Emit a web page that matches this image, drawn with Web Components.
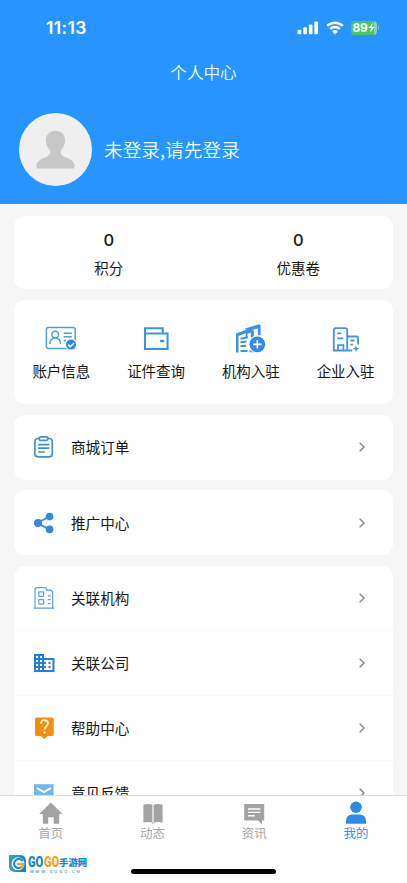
<!DOCTYPE html>
<html lang="zh-CN">
<head>
<meta charset="utf-8">
<title>个人中心</title>
<style>
html,body{margin:0;height:100%;overflow:hidden}
body{font-family:"Noto Sans CJK SC","Liberation Sans",sans-serif;color:#161616;background:#f6f6f6}
</style>
</head>
<body>
<profile-page></profile-page>
<script>
const define = (name, html) => {
  customElements.define(name, class extends HTMLElement {
    constructor() {
      super();
      const t = document.createElement('template');
      t.innerHTML = html;
      this.attachShadow({mode: 'open'}).append(t.content.cloneNode(true));
    }
    connectedCallback() {
      for (const el of this.shadowRoot.querySelectorAll('[data-bind]'))
        el.textContent = this.getAttribute(el.dataset.bind) || '';
    }
  });
};

const ICONS = {
  idcard: [32, `<g fill="none" stroke="#4f9fdc" stroke-width="1.5"><rect x="1.4" y="4.6" width="28.8" height="21" rx="2"/><circle cx="10.2" cy="11.6" r="3.4"/><path d="M4.8 21c.2-3.8 2.3-6 5.4-6s5.2 2.2 5.4 6M18.6 10.2h8.2M18.6 13.8h8.2M18.6 17.4h2.4"/></g><circle cx="26" cy="21.6" r="6" fill="#fff"/><circle cx="26" cy="21.6" r="5" fill="#2c8be0"/><path d="M23.2 21.6l2.1 2.1 3.7-3.8" fill="none" stroke="#fff" stroke-width="1.5"/>`],
  wallet: [32, `<g fill="none" stroke="#3b94e0" stroke-width="2"><path d="M5 10.400V5.200h17.800v5.200M5 10.400h22.600v15.700H5z"/></g><path d="M20 16.800h4.200v2.500H20z" fill="#3b94e0"/>`],
  org: [32, `<g fill="#3c93de"><path d="M10.500 6.800V5.200L24.200 1.300l1.400 1.200v9.800c-1.100 0-1.800.1-2.700.4V5.400L16 7.300z"/><path d="M1 29.500V10.500l9.600-3.500h7l1.300 1.200v6.500l-3 2V9.400L12.500 10.700v3.800l-1.700.5v-4.700l-7.300 2.600v16.600z"/></g><path d="M5.500 15.700l7.500-1.500M5.500 19.300l6-.9M5.500 23h5.500M5.500 28h7M14.500 28.200h4" stroke="#3c93de" stroke-width="2"/><circle cx="22.300" cy="21.300" r="9" fill="#fff"/><circle cx="22.300" cy="21.300" r="7.900" fill="#2f8ce2"/><path d="M18 21.300h8.600M22.300 17v8.600" stroke="#fff" stroke-width="1.700"/>`],
  firm: [32, `<g fill="none" stroke="#3f98e2" stroke-width="1.800"><path d="M17.200 27.500H3.800V7.200q0-2 2-2h9.400q2 0 2 2v20.300zM8 27.200v-5h5.400v5M7.200 10.300h4M7.200 15.400h6.200M17.200 13.500h9.400q1.500 0 1.500 1.500v6.500M17.200 27.500h5.200M20.400 17.500h4M20.400 21.600h2.500"/></g><path d="M26 22.500l1 2.300 2.400 1-2.400 1-1 2.400-1-2.400-2.400-1 2.400-1z" fill="#3f98e2"/>`],
  clipboard: [24, `<g fill="none" stroke="#4091cd" stroke-width="1.700" stroke-linejoin="round" stroke-linecap="round"><path d="M7.300 3.500H5.500Q2.900 3.900 2.900 6.500v12.300q0 3 3 3h11.400q3 0 3-3V6.500q0-2.600-2.600-3h-1.600"/><path d="M8.600 1.900h6q1.500 0 1.500 1.500t-1.500 2h-6q-1.500 0-1.500-1.700t1.500-1.800z"/><path d="M6.800 9.600h9.800M6.800 13.200h9.800M6.800 17h5.600"/></g>`],
  share: [24, `<path d="M17.300 5.700L5.300 12l12 6.300" fill="none" stroke="#3b8fd8" stroke-width="1.900"/><g fill="#2c8be0"><circle cx="6" cy="12" r="4"/><circle cx="17.600" cy="5.600" r="3.800"/><circle cx="17.600" cy="18.400" r="3.800"/></g>`],
  branch: [24, `<g fill="none" stroke="#5c9fd8" stroke-width="1.200"><path d="M1.500 22.200h21M3 22V3.800Q3 1.700 5 1.700h8.200q1.500 0 1.500 1.500v1h3.600q2.400.6 2.400 3V22"/><rect x="6.800" y="5.800" width="4.800" height="4.500" rx=".7"/><rect x="6.800" y="13.600" width="4.800" height="4.500" rx=".7"/><path d="M15.800 9.800h3M15.800 13.600h3M15.800 17.600h3"/></g>`],
  company: [24, `<path fill="#2081d2" fill-rule="evenodd" d="M12 7V3H2v18h20.500V7zM6 19H4v-2h2zm0-4H4v-2h2zm0-4H4V9h2zm0-4H4V5h2zm4 12H8v-2h2zm0-4H8v-2h2zm0-4H8V9h2zm0-4H8V5h2zm10.500 12H12v-2h2v-2h-2v-2h2v-2h-2V9h8.500zM18.500 11h-2v2h2zm0 4h-2v2h2z"/>`],
  help: [24, `<path d="M4.500 1.400h15.700q1.500 0 1.500 1.500v15.500q0 1.500-1.500 1.500h-4.700L12.300 23l-3.200-3.100H4.500Q3 19.900 3 18.400V2.900q0-1.500 1.500-1.500z" fill="#f0900f"/><path d="M8.900 8q0-3.700 3.500-3.700T15.900 7.500c0 2.700-3.400 2.800-3.400 6" fill="none" stroke="#fff3dc" stroke-width="1.900"/><circle cx="12.500" cy="16.600" r="1.200" fill="#fff3dc"/>`],
  mail: [24, `<path d="M2 3.200h19.600v17.500H2z" fill="#6fb7ee"/><path d="M5 7.200l6.900 4 6.900-4" fill="none" stroke="#fff" stroke-width="2"/>`],
  home: [24, `<path d="M.2 13L11.800 1.500 23.600 13h-3.400v9.800h-5.500v-6.500H9.200v6.500H3.800V13z" fill="#a3a3a3"/>`],
  book: [24, `<path d="M2.400 3.700q4.600-1.300 9 .1v17.600q-4.400-1-9 0zM12.600 3.800q4.400-1.400 9-.1v17.700q-4.600-1-9 0z" fill="#a3a3a3"/><path d="M10.500 21.500h3l-1.500 1.600z" fill="#a3a3a3"/>`],
  chat: [24, `<path d="M2.200 3h20v16.500H20V23l-4.200-3.500H2.200z" fill="#a3a3a3"/><path d="M6 8h12.400M6 11.400h12.400M6 14.800h7" stroke="#fff" stroke-width="1.400"/>`],
  me: [24, `<ellipse cx="12" cy="6.300" rx="5.800" ry="5.700" fill="#2c8be4"/><path d="M2 22.800v-2.700q0-6.600 6.500-6.600h7q6.500 0 6.500 6.600v2.700z" fill="#2c8be4"/>`]
};
customElements.define('app-icon', class extends HTMLElement {
  connectedCallback() {
    const [s, body] = ICONS[this.getAttribute('name')];
    const root = this.shadowRoot || this.attachShadow({mode: 'open'});
    root.innerHTML = `<style>:host{display:block;flex:none;width:${s}px;height:${s}px}svg{display:block}</style><svg width="${s}" height="${s}" viewBox="0 0 ${s} ${s}">${body}</svg>`;
  }
});

define('status-bar', `<style>
:host{display:flex;justify-content:space-between;align-items:center;height:55px;padding:0 28px 0 46px;box-sizing:border-box;color:#fff}
time{font:600 17.500px/20px Inter,sans-serif;letter-spacing:.35px}
svg{display:block}
.r{display:flex;align-items:center;gap:7px}
.b{display:flex;align-items:center}
.lvl{width:25.500px;height:14px;border-radius:4px;background:linear-gradient(90deg,#46c763 88%,#8bd3b5 88%);font:700 12px/14px Inter,sans-serif;display:flex;align-items:center;padding-left:1.500px;box-sizing:border-box;letter-spacing:-.2px}
.cap{width:1.500px;height:5px;border-radius:0 2px 2px 0;background:#79b7ee;margin-left:1px}
</style><time>11:13</time><div class="r">
<svg width="22" height="14" viewBox="0 0 22 14" fill="#fff"><rect x=".6" y="8.800" width="3.700" height="4.500" rx="1"/><rect x="6.300" y="6.300" width="3.700" height="7" rx="1"/><rect x="11.800" y="3.500" width="3.700" height="9.800" rx="1"/><rect x="17.300" y=".5" width="3.700" height="12.800" rx="1"/></svg>
<svg width="18" height="14" viewBox="0 0 18 14"><g fill="none" stroke="#fff" stroke-width="2.500"><path d="M1.200 4.900a11.200 11.200 0 0 1 15.600 0"/><path d="M4.200 8a7 7 0 0 1 9.600 0"/></g><path d="M6.100 10.400a4.200 4.200 0 0 1 5.800 0L9 13.400z" fill="#fff"/></svg>
<div class="b"><div class="lvl"><span>89</span><svg width="7" height="11" viewBox="0 0 7 11"><path d="M5 .5L.3 6h2.800L2 10.500 6.700 4.800H3.900z" fill="#fff"/></svg></div><div class="cap"></div></div></div>`);

define('profile-header', `<style>
:host{display:flex;flex-direction:column;height:204px;flex:none;background:#2894ff;color:#f1ffff}
h1{margin:0;height:35px;font-size:16.600px;font-weight:350;line-height:35px;text-align:center}
.user{display:flex;align-items:center;gap:12px;padding:23px 19px 0}
.name{font-size:18.700px;font-weight:350;line-height:28px;white-space:nowrap;padding-bottom:2px}
svg{display:block;flex:none}
</style><status-bar></status-bar><h1><slot name="title"></slot></h1>
<div class="user"><svg width="73" height="73" viewBox="0 0 73 73"><circle cx="36.500" cy="36.500" r="36.500" fill="#efefef"/><path d="M36.500 17.800c5.500 0 9.700 4 9.700 9.500 0 4.500-2.200 7.500-4.300 10-1.200 3.200.2 5 4 6.600 5 2 9.700 4 9.700 9.300 0 1.600-.7 2.300-2 2.300H19.400c-1.300 0-2-.7-2-2.300 0-5.300 4.700-7.300 9.700-9.300 3.800-1.600 5.200-3.400 4-6.600-2.100-2.500-4.300-5.500-4.300-10 0-5.500 4.200-9.500 9.700-9.500z" fill="#c7c7c7"/></svg><div class="name"><slot></slot></div></div>`);

define('ui-card', `<style>:host{display:block;flex:none;background:#fff;border-radius:11px;overflow:hidden}.row{display:flex;height:100%}:host([stack]) .row{display:block}</style><div class="row"><slot></slot></div>`);

define('stat-item', `<style>:host{flex:1;text-align:center;padding-top:13px}
b{display:block;font:500 16.500px/22px Inter,sans-serif}span{display:block;font-size:14.500px;line-height:20px;margin-top:7px}</style><b data-bind="value"></b><span><slot></slot></span>`);

define('grid-entry', `<style>:host{flex:1;display:flex;flex-direction:column;align-items:center;padding-top:23px}
span{font-size:14.500px;line-height:20px;margin-top:6px;white-space:nowrap}</style><slot name="icon"></slot><span><slot></slot></span>`);

define('list-row', `<style>:host{display:flex;align-items:center;height:65px;box-sizing:border-box;padding:0 27px 0 18px}
:host([line]){border-bottom:1px solid #f9f9f9}
span{flex:1;margin-left:15px;font-size:14.600px;line-height:22px}svg{display:block}</style><slot name="icon"></slot><span><slot></slot></span><svg width="8" height="12" viewBox="0 0 8 12"><path d="M1.700 1.800L6 6 1.700 10.200" fill="none" stroke="#8d8d8d" stroke-width="1.500"/></svg>`);

define('tab-item', `<style>:host{flex:1;display:flex;flex-direction:column;align-items:center;padding-top:5px;color:#a6a6a6}
:host([active]){color:#3492e2}span{font-size:12.500px;line-height:18px;margin-top:-1px;white-space:nowrap}</style><slot name="icon"></slot><span><slot></slot></span>`);

define('tab-bar', `<style>:host{display:flex;flex-direction:column;height:88px;flex:none;box-sizing:border-box;border-top:1px solid #dcdcdc;background:#fff}
nav{display:flex;height:73px}.home{width:145px;height:5px;border-radius:3px;background:#000;margin:0 auto}</style><nav><slot></slot></nav><div class="home"></div>`);

define('site-mark', `<style>:host{position:absolute;left:8px;top:854px;display:flex;gap:1px;align-items:flex-start}
svg{display:block}.t{display:flex;flex-direction:column}
.n{display:flex;align-items:center;height:14px;font:900 15.500px/14px Roboto,sans-serif;color:#1587cf;white-space:nowrap;margin-top:1px}
.n span{display:block}.g{width:15.500px;transform:scaleX(.72);transform-origin:0 50%}.o{color:#f6a11c}
.c{font:900 9.400px/14px "Noto Sans CJK SC",sans-serif}
.u{font:700 4px/5px "Liberation Sans",sans-serif;letter-spacing:1.800px;color:#52a6d6;padding-left:2px;white-space:nowrap}
</style><svg width="19" height="19" viewBox="0 0 19 19"><path d="M1 1h12q5 1 5 6v11H7Q1 17 1 11z" fill="#1685c9"/><path d="M1 1h12L5 8l4 10H7Q1 17 1 11z" fill="#2f9fc0"/><circle cx="10" cy="9.800" r="6.500" fill="#e8f6fc"/><path d="M14.500 7a4.600 4.600 0 1 0-.4 5.700" fill="none" stroke="#2489be" stroke-width="2"/><path d="M9 10h6.200q0 3.200-2.700 4" fill="none" stroke="#eaa437" stroke-width="1.800"/></svg>
<div class="t"><div class="n"><span class="g">GO</span><span class="g o">GO</span><span class="c">手游网</span></div><div class="u">WWW.GOGO.CN</div></div>`);

define('profile-page', `<style>
:host{position:relative;display:flex;flex-direction:column;width:407px;height:883px;overflow:hidden;background:#f6f6f6}
main{flex:1;min-height:0;overflow:hidden;display:flex;flex-direction:column;gap:10.500px;padding:12px 14px 0}
.stats{height:73px}.grid{height:104.500px}
</style>
<profile-header><span slot="title">个人中心</span>未登录,请先登录</profile-header>
<main>
<ui-card class="stats"><stat-item value="0">积分</stat-item><stat-item value="0">优惠卷</stat-item></ui-card>
<ui-card class="grid">
<grid-entry><app-icon slot="icon" name="idcard"></app-icon>账户信息</grid-entry>
<grid-entry><app-icon slot="icon" name="wallet"></app-icon>证件查询</grid-entry>
<grid-entry><app-icon slot="icon" name="org"></app-icon>机构入驻</grid-entry>
<grid-entry><app-icon slot="icon" name="firm"></app-icon>企业入驻</grid-entry>
</ui-card>
<ui-card stack><list-row><app-icon slot="icon" name="clipboard"></app-icon>商城订单</list-row></ui-card>
<ui-card stack><list-row><app-icon slot="icon" name="share"></app-icon>推广中心</list-row></ui-card>
<ui-card stack>
<list-row line><app-icon slot="icon" name="branch"></app-icon>关联机构</list-row>
<list-row line><app-icon slot="icon" name="company"></app-icon>关联公司</list-row>
<list-row line><app-icon slot="icon" name="help"></app-icon>帮助中心</list-row>
<list-row><app-icon slot="icon" name="mail"></app-icon>意见反馈</list-row>
</ui-card>
</main>
<tab-bar>
<tab-item><app-icon slot="icon" name="home"></app-icon>首页</tab-item>
<tab-item><app-icon slot="icon" name="book"></app-icon>动态</tab-item>
<tab-item><app-icon slot="icon" name="chat"></app-icon>资讯</tab-item>
<tab-item active><app-icon slot="icon" name="me"></app-icon>我的</tab-item>
</tab-bar>
<site-mark></site-mark>`);
</script>
</body>
</html>
